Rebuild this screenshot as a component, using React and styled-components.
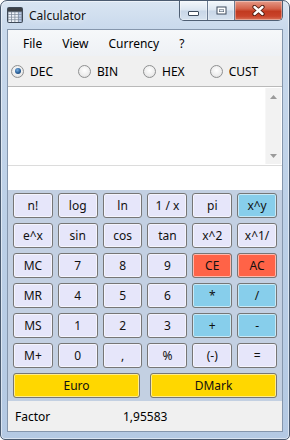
import React from 'react';
import styled, { createGlobalStyle } from 'styled-components';

const GlobalStyle = createGlobalStyle`
  html, body { margin: 0; padding: 0; background: #ffffff; }
  body {
    font-family: "Noto Sans", "Open Sans", sans-serif;
    width: 290px; height: 440px; overflow: hidden;
    color: #000;
  }
  * { box-sizing: border-box; }
`;

const Window = styled.div`
  width: 290px;
  height: 440px;
  border: 1px solid #4b5b70;
  border-radius: 7px 7px 5px 5px;
  background: linear-gradient(180deg, #d9e5f2 0px, #c9d9ec 28px, #bcd0e7 50%, #b4c9e3 100%);
  box-shadow: inset 0 0 0 1px rgba(255, 255, 255, 0.5);
  padding: 0 6px 7px 6px;
  display: flex;
  flex-direction: column;
`;

const TitleBar = styled.div`
  height: 28px;
  display: flex;
  align-items: center;
`;

const AppIcon = styled.svg`
  width: 16px;
  height: 16px;
  flex: none;
`;

const TitleText = styled.span`
  margin-left: 6px;
  font-size: 12px;
  color: #111;
  text-shadow: 0 0 6px rgba(255, 255, 255, 0.9);
`;

const CaptionGroup = styled.div`
  margin-left: auto;
  align-self: flex-start;
  display: flex;
  height: 20px;
  border: 1px solid #4f5f74;
  border-top: none;
  border-radius: 0 0 5px 5px;
  overflow: hidden;
`;

const CaptionButton = styled.div`
  width: ${(p) => p.$w}px;
  height: 100%;
  display: flex;
  align-items: center;
  justify-content: center;
  border-right: ${(p) => (p.$last ? 'none' : '1px solid #6b7b91')};
  background: ${(p) =>
    p.$close
      ? 'linear-gradient(180deg, #e59a88 0%, #d4634b 40%, #c23a20 55%, #c9432a 80%, #d8735a 100%)'
      : 'linear-gradient(180deg, #f3f7fb 0%, #dce6f1 48%, #c8d6e7 52%, #d6e2ef 100%)'};
  box-shadow: inset 0 0 0 1px rgba(255, 255, 255, 0.35);
`;

const Client = styled.div`
  flex: 1;
  display: flex;
  flex-direction: column;
  border: 1px solid #8596ac;
  background: #f0f0f0;
`;

const MenuBar = styled.div`
  height: 26px;
  display: flex;
  align-items: center;
  padding-left: 5px;
  background: linear-gradient(180deg, #f6f8fa 0%, #eef1f5 100%);
  font-size: 12px;
`;

const MenuItem = styled.span`
  padding: 0 10px;
`;

const RadioRow = styled.div`
  height: 30px;
  display: flex;
  align-items: center;
  gap: 25px;
  padding-left: 3px;
  font-size: 12px;
`;

const RadioOption = styled.label`
  display: flex;
  align-items: center;
  gap: 6px;
`;

const RadioCircle = styled.span`
  width: 13px;
  height: 13px;
  border-radius: 50%;
  border: 1px solid #8f9091;
  background: radial-gradient(circle at 50% 40%, #ffffff 0%, #ececec 60%, #d6d6d6 100%);
  display: flex;
  align-items: center;
  justify-content: center;
  &::after {
    content: '';
    width: 6px;
    height: 6px;
    border-radius: 50%;
    display: ${(p) => (p.$checked ? 'block' : 'none')};
    background: radial-gradient(circle at 40% 35%, #79b0e3 0%, #2a5f97 55%, #173a63 100%);
  }
`;

const Display = styled.div`
  height: 80px;
  background: #ffffff;
  border-top: 1px solid #b9b9b9;
  border-bottom: 1px solid #dcdcdc;
  display: flex;
  justify-content: flex-end;
  padding: 1px 1px 1px 0;
`;

const ScrollBar = styled.div`
  width: 16px;
  background: #f2f2f2;
  border-left: 1px solid #f7f7f7;
  display: flex;
  flex-direction: column;
  justify-content: space-between;
  align-items: center;
  padding: 7px 0 6px;
`;

const Arrow = styled.svg`
  width: 7px;
  height: 4px;
`;

const EntryLine = styled.div`
  height: 24px;
  background: #ffffff;
`;

const Panel = styled.div`
  flex: 1;
  background: #c3d0e2;
  padding: 3px 5px;
  display: flex;
  flex-direction: column;
  gap: 5px;
`;

const KeyGrid = styled.div`
  display: grid;
  grid-template-columns: repeat(6, 1fr);
  grid-auto-rows: 25px;
  gap: 5px;
`;

const CurrencyRow = styled.div`
  display: grid;
  grid-template-columns: 1fr 1fr;
  gap: 10px;
  height: 25px;
`;

const tones = {
  plain: '#e6e6fa',
  blue: '#87ceeb',
  red: '#ff6347',
  gold: '#ffd700',
};

const Key = styled.button`
  font-family: inherit;
  font-size: 12px;
  color: #111;
  padding: 0;
  margin: 0;
  border: 1px solid #767676;
  border-radius: 3px;
  background: ${(p) => tones[p.$tone || 'plain']};
  box-shadow: inset 0 0 0 1px rgba(255, 255, 255, 0.55);
  display: flex;
  align-items: center;
  justify-content: center;
  white-space: nowrap;
  overflow: hidden;
`;

const StatusBar = styled.div`
  height: 30px;
  display: flex;
  align-items: center;
  padding-left: 7px;
  font-size: 12px;
  background: #f0f0f0;
`;

const StatusLabel = styled.span`
  width: 108px;
`;

const keys = [
  ['n!'], ['log'], ['ln'], ['1 / x'], ['pi'], ['x^y', 'blue'],
  ['e^x'], ['sin'], ['cos'], ['tan'], ['x^2'], ['x^1/'],
  ['MC'], ['7'], ['8'], ['9'], ['CE', 'red'], ['AC', 'red'],
  ['MR'], ['4'], ['5'], ['6'], ['*', 'blue'], ['/', 'blue'],
  ['MS'], ['1'], ['2'], ['3'], ['+', 'blue'], ['-', 'blue'],
  ['M+'], ['0'], [','], ['%'], ['(-)'], ['='],
];

function CalcIcon() {
  return (
    <AppIcon viewBox="0 0 16 16">
      <rect x="0.5" y="0.5" width="15" height="15" rx="1" fill="#7d8a9a" stroke="#3f4a58" />
      <rect x="1" y="1" width="14" height="3.5" fill="#3c4046" />
      {[0, 1, 2, 3].map((r) =>
        [0, 1, 2, 3].map((c) => (
          <rect
            key={`${r}-${c}`}
            x={1.5 + c * 3.4}
            y={5.3 + r * 2.6}
            width="2.6"
            height="1.9"
            fill={c === 3 ? '#b8c9e6' : '#eef2f8'}
          />
        ))
      )}
    </AppIcon>
  );
}

function MinGlyph() {
  return (
    <svg width="11" height="6" viewBox="0 0 11 6" style={{ marginTop: 6 }}>
      <rect x="0.5" y="0.5" width="10" height="4" rx="0.5" fill="#ffffff" stroke="#3c4a5c" />
    </svg>
  );
}

function MaxGlyph() {
  return (
    <svg width="11" height="9" viewBox="0 0 11 9">
      <rect x="0.5" y="0.5" width="10" height="8" fill="#3c4a5c" />
      <rect x="1.5" y="1.5" width="8" height="6" fill="#ffffff" />
      <rect x="3" y="3.5" width="5" height="2.5" fill="#3c4a5c" />
      <rect x="3.5" y="4" width="4" height="1.5" fill="#e4ebf3" />
    </svg>
  );
}

function CloseGlyph() {
  return (
    <svg width="13" height="11" viewBox="0 0 13 11">
      <path d="M2.5 2 L10.5 9 M10.5 2 L2.5 9" stroke="#4a1a10" strokeWidth="4.2" strokeLinecap="round" />
      <path d="M2.5 2 L10.5 9 M10.5 2 L2.5 9" stroke="#ffffff" strokeWidth="2.4" strokeLinecap="round" />
    </svg>
  );
}

export default function App() {
  return (
    <>
      <GlobalStyle />
      <Window>
        <TitleBar>
          <CalcIcon />
          <TitleText>Calculator</TitleText>
          <CaptionGroup>
            <CaptionButton $w={28}><MinGlyph /></CaptionButton>
            <CaptionButton $w={27}><MaxGlyph /></CaptionButton>
            <CaptionButton $w={47} $close $last><CloseGlyph /></CaptionButton>
          </CaptionGroup>
        </TitleBar>
        <Client>
          <MenuBar>
            <MenuItem>File</MenuItem>
            <MenuItem>View</MenuItem>
            <MenuItem>Currency</MenuItem>
            <MenuItem>?</MenuItem>
          </MenuBar>
          <RadioRow>
            <RadioOption><RadioCircle $checked />DEC</RadioOption>
            <RadioOption><RadioCircle />BIN</RadioOption>
            <RadioOption><RadioCircle />HEX</RadioOption>
            <RadioOption><RadioCircle />CUST</RadioOption>
          </RadioRow>
          <Display>
            <ScrollBar>
              <Arrow viewBox="0 0 7 4"><path d="M0 4 L3.5 0 L7 4 Z" fill="#9a9a9a" /></Arrow>
              <Arrow viewBox="0 0 7 4"><path d="M0 0 L3.5 4 L7 0 Z" fill="#9a9a9a" /></Arrow>
            </ScrollBar>
          </Display>
          <EntryLine />
          <Panel>
            <KeyGrid>
              {keys.map(([label, tone]) => (
                <Key key={label} $tone={tone}>{label}</Key>
              ))}
            </KeyGrid>
            <CurrencyRow>
              <Key $tone="gold">Euro</Key>
              <Key $tone="gold">DMark</Key>
            </CurrencyRow>
          </Panel>
          <StatusBar>
            <StatusLabel>Factor</StatusLabel>
            <span>1,95583</span>
          </StatusBar>
        </Client>
      </Window>
    </>
  );
}
